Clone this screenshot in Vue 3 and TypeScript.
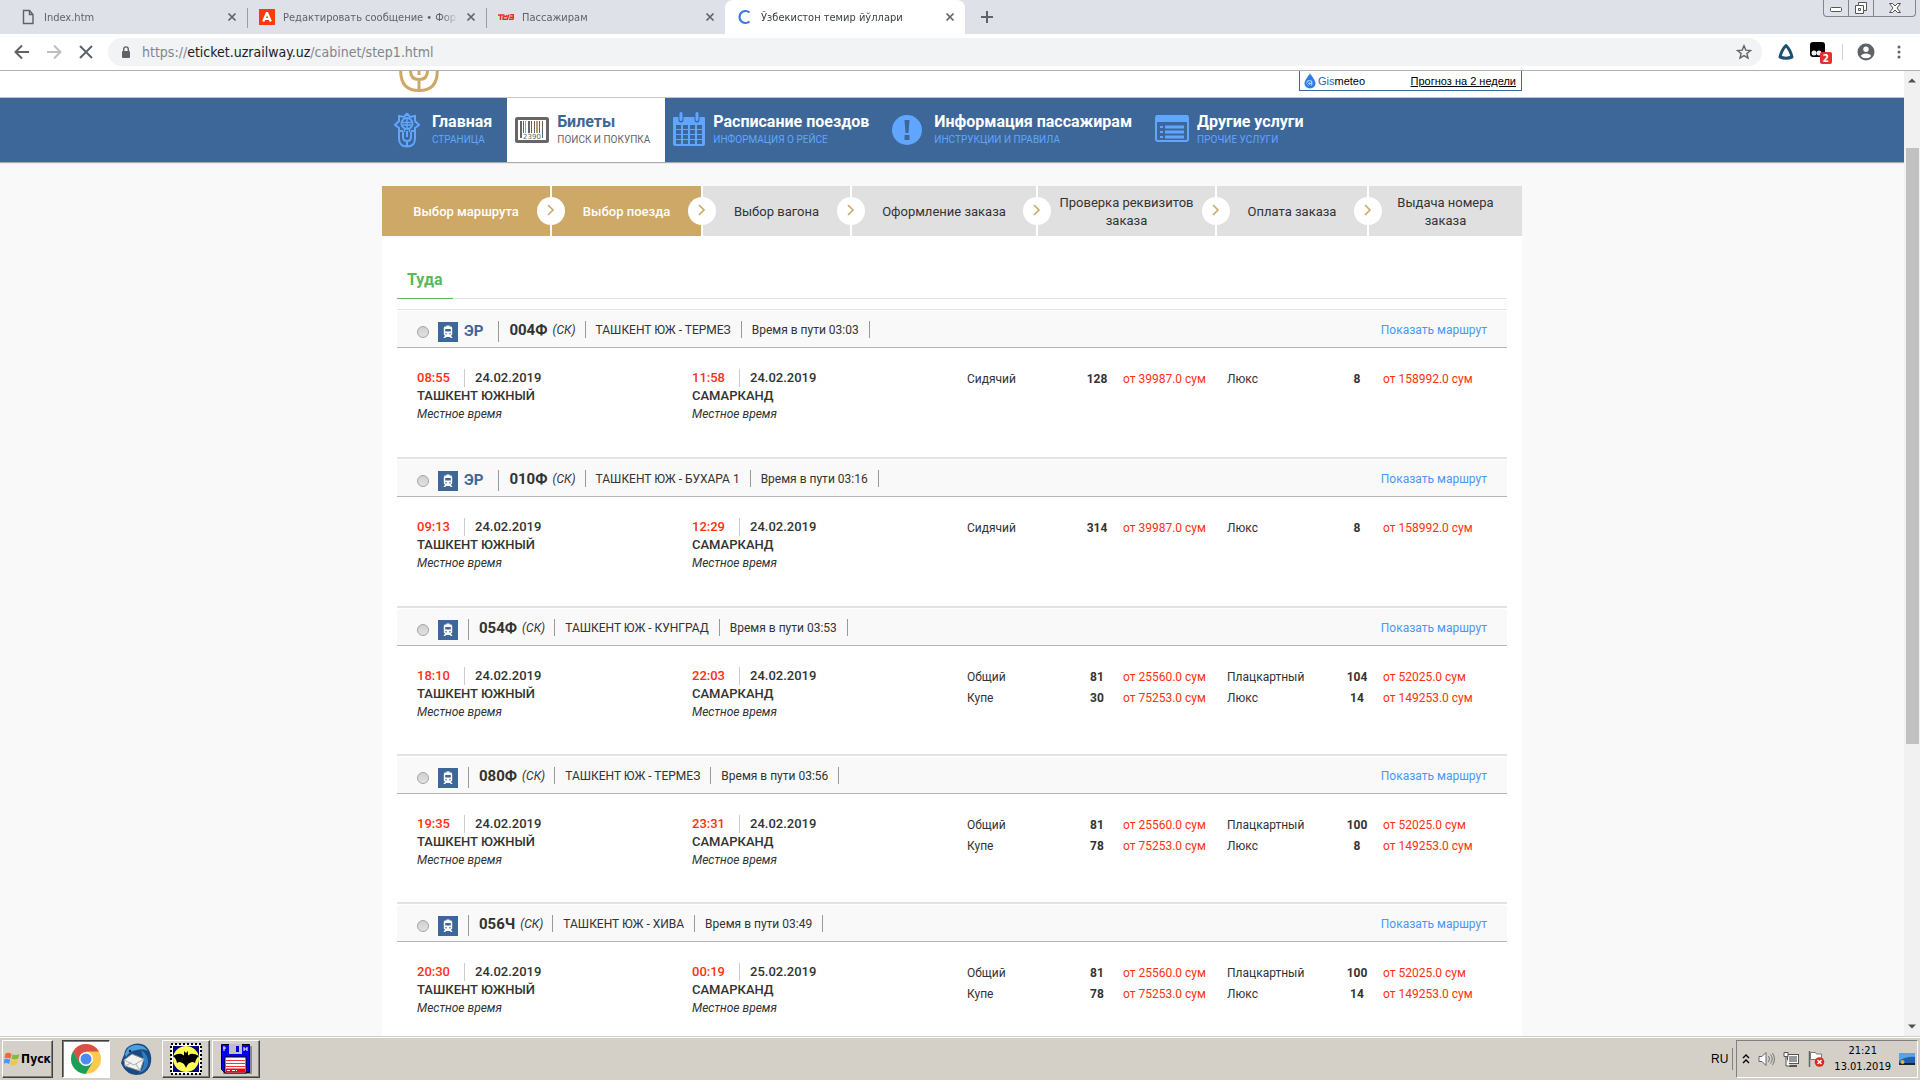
<script setup lang="ts">
import { ref } from 'vue'

interface Tab { title: string; icon: 'file' | 'red' | 'rzd' | 'spin'; active?: boolean }
interface Seat { name: string; count: number; price: string }
interface Train {
  no: string; fast?: boolean; route: string; time: string
  dep: string; depDate: string; arr: string; arrDate: string; seats: Seat[][]
}

const tabs: Tab[] = [
  { title: 'Index.htm', icon: 'file' },
  { title: 'Редактировать сообщение • Форум', icon: 'red' },
  { title: 'Пассажирам', icon: 'rzd' },
  { title: 'Ўзбекистон темир йўллари', icon: 'spin', active: true },
]

const nav = [
  { id: 'home', title: 'Главная', sub: 'Страница' },
  { id: 'ticket', title: 'Билеты', sub: 'Поиск и покупка' },
  { id: 'calendar', title: 'Расписание поездов', sub: 'Информация о рейсе' },
  { id: 'info', title: 'Информация пассажирам', sub: 'Инструкции и правила' },
  { id: 'list', title: 'Другие услуги', sub: 'Прочие услуги' },
]

const steps = [
  'Выбор маршрута', 'Выбор поезда', 'Выбор вагона', 'Оформление заказа',
  'Проверка реквизитов заказа', 'Оплата заказа', 'Выдача номера заказа',
]

const seat = (name: string, count: number, price: string): Seat => ({ name, count, price })

const trains: Train[] = [
  { no: '004Ф', fast: true, route: 'ТАШКЕНТ ЮЖ - ТЕРМЕЗ', time: '03:03', dep: '08:55', depDate: '24.02.2019', arr: '11:58', arrDate: '24.02.2019',
    seats: [[seat('Сидячий', 128, '39987.0'), seat('Люкс', 8, '158992.0')]] },
  { no: '010Ф', fast: true, route: 'ТАШКЕНТ ЮЖ - БУХАРА 1', time: '03:16', dep: '09:13', depDate: '24.02.2019', arr: '12:29', arrDate: '24.02.2019',
    seats: [[seat('Сидячий', 314, '39987.0'), seat('Люкс', 8, '158992.0')]] },
  { no: '054Ф', route: 'ТАШКЕНТ ЮЖ - КУНГРАД', time: '03:53', dep: '18:10', depDate: '24.02.2019', arr: '22:03', arrDate: '24.02.2019',
    seats: [[seat('Общий', 81, '25560.0'), seat('Плацкартный', 104, '52025.0')], [seat('Купе', 30, '75253.0'), seat('Люкс', 14, '149253.0')]] },
  { no: '080Ф', route: 'ТАШКЕНТ ЮЖ - ТЕРМЕЗ', time: '03:56', dep: '19:35', depDate: '24.02.2019', arr: '23:31', arrDate: '24.02.2019',
    seats: [[seat('Общий', 81, '25560.0'), seat('Плацкартный', 100, '52025.0')], [seat('Купе', 78, '75253.0'), seat('Люкс', 8, '149253.0')]] },
  { no: '056Ч', route: 'ТАШКЕНТ ЮЖ - ХИВА', time: '03:49', dep: '20:30', depDate: '24.02.2019', arr: '00:19', arrDate: '25.02.2019',
    seats: [[seat('Общий', 81, '25560.0'), seat('Плацкартный', 100, '52025.0')], [seat('Купе', 78, '75253.0'), seat('Люкс', 14, '149253.0')]] },
]

const chosen = ref('')
const bars = [0, 3, 5, 8, 11, 14, 16, 19, 22]
</script>

<template>
  <div class="desktop">
    <header class="browser">
      <div class="tabstrip">
        <div v-for="t in tabs" :key="t.title" class="tab" :class="{ active: t.active }">
          <svg v-if="t.icon === 'file'" class="fav" viewBox="0 0 16 16"><path d="M3.500 1.500h6l3.500 4v9h-9.500z M9.500 1.500v4h3.500" fill="none" stroke="#5f6368" stroke-width="1.400" /></svg>
          <svg v-else-if="t.icon === 'red'" class="fav" viewBox="0 0 16 16"><rect width="16" height="16" fill="#f93a0c" /><path d="M8 3.500L4.200 12.500M8 3.500l3.800 9M5.500 10h5" fill="none" stroke="#fff" stroke-width="2.200" /></svg>
          <svg v-else-if="t.icon === 'rzd'" class="fav" viewBox="0 0 16 16"><path d="M0 6h6.500M2.500 6v5M5 11V8.500q0-1 1-1h2.500V6M5.500 10.300h4l1-4h1M11 10.300h3.500q.8 0 .8-.8V5.800h-3M11.500 8.300h3.500" fill="none" stroke="#e0301e" stroke-width="1.400" /></svg>
          <svg v-else class="fav" viewBox="0 0 16 16"><path d="M12.500 3.500a6 6 0 1 0 0 9" fill="none" stroke="#3b78e7" stroke-width="2.200" /></svg>
          <span class="tab-title">{{ t.title }}</span>
          <button class="plain" aria-label="Закрыть"><svg width="10" height="10" viewBox="0 0 10 10"><path d="M1.500 1.500l7 7M8.500 1.500l-7 7" stroke="#5f6368" stroke-width="1.700" /></svg></button>
        </div>
        <button class="plain newtab" aria-label="Новая вкладка"><svg width="14" height="14" viewBox="0 0 14 14"><path d="M7 1v12M1 7h12" stroke="#5f6368" stroke-width="2" /></svg></button>
        <div class="winbtns">
          <button aria-label="Свернуть"><svg width="14" height="10" viewBox="0 0 14 10"><rect x="1.500" y="4.500" width="11" height="4" rx="1" fill="#fff" stroke="#555" /></svg></button>
          <button aria-label="Развернуть"><svg width="14" height="14" viewBox="0 0 14 14"><path d="M4.500 1.500h8v8h-3v3h-8v-8h3z" fill="#fff" stroke="#555" /><path d="M4.500 4.500h5v5M4.500 7.500h2v2h-2z" fill="none" stroke="#555" /></svg></button>
          <button class="wide" aria-label="Закрыть окно"><svg width="14" height="12" viewBox="0 0 14 12"><path d="M1.500 1.500h3L7 4l2.500-2.500h3L9 6l3.500 4.500h-3L7 8l-2.500 2.500h-3L5 6z" fill="#fff" stroke="#555" /></svg></button>
        </div>
      </div>

      <div class="toolbar">
        <button class="plain tool" aria-label="Назад"><svg width="16" height="16" viewBox="0 0 16 16"><path d="M15 8H2M8 1.500L1.500 8L8 14.500" fill="none" stroke="#5f6368" stroke-width="2" /></svg></button>
        <button class="plain tool" aria-label="Вперёд"><svg width="16" height="16" viewBox="0 0 16 16"><path d="M1 8h13M8 1.500L14.500 8L8 14.500" fill="none" stroke="#bdbfc1" stroke-width="2" /></svg></button>
        <button class="plain tool" aria-label="Остановить"><svg width="16" height="16" viewBox="0 0 16 16"><path d="M2 2l12 12M14 2L2 14" stroke="#5f6368" stroke-width="2" /></svg></button>
        <div class="omnibox">
          <svg width="10" height="13" viewBox="0 0 10 13"><rect x="1" y="5" width="8" height="7" rx="1" fill="#5f6368" /><path d="M2.700 5V3.200a2.300 2.300 0 0 1 4.600 0V5" fill="none" stroke="#5f6368" stroke-width="1.400" /></svg>
          <div class="url">https://<b>eticket.uzrailway.uz</b>/cabinet/step1.html</div>
          <button class="plain" aria-label="Добавить в закладки"><svg width="16" height="16" viewBox="0 0 16 16"><path d="M8 1.800l1.800 4.300 4.700.4-3.600 3 1.100 4.600L8 11.600l-4 2.500 1.100-4.600-3.600-3 4.700-.4z" fill="none" stroke="#5f6368" stroke-width="1.400" /></svg></button>
        </div>
        <div class="exts">
          <svg width="18" height="18" viewBox="0 0 18 18"><path d="M9 2.500C11 4.500 14 9.500 15 14Q9 16.500 3 14C4 9.500 7 4.500 9 2.500z" fill="none" stroke="#1d4f73" stroke-width="3" stroke-linejoin="round" /></svg>
          <svg width="24" height="24" viewBox="0 0 24 24"><rect x="1" y="2" width="15" height="15" rx="3" fill="#000" /><circle cx="5" cy="13" r="2.500" fill="#eee" /><circle cx="10" cy="13" r="2.500" fill="#eee" /><rect x="11" y="12" width="12" height="12" rx="2" fill="#e53030" /><text x="17" y="22" text-anchor="middle" class="badge">2</text></svg>
          <i class="tb-sep"></i>
          <svg width="18" height="18" viewBox="0 0 18 18"><circle cx="9" cy="9" r="8.500" fill="#5f6368" /><circle cx="9" cy="6.300" r="2.700" fill="#fff" /><path d="M3.700 13q1.500-2.600 5.300-2.600t5.300 2.600q-1.800 2.300-5.300 2.300T3.700 13z" fill="#fff" /></svg>
          <svg width="4" height="16" viewBox="0 0 4 16"><circle v-for="y in [3, 8, 13]" :key="y" cx="2" :cy="y" r="1.500" fill="#5f6368" /></svg>
        </div>
      </div>
    </header>

    <main class="viewport">
      <div class="page">
        <div class="site-head">
          <div class="wrap head-row">
            <svg class="logo" width="40" height="22" viewBox="0 0 40 22"><g fill="none" stroke="#cda867" stroke-width="3"><path d="M1.700 0Q1.700 19.500 20 19.500T38.300 0" /><path d="M11.500 0q0 8.500 8.500 8.500T28.500 0M20 8.500v11M20 0v4" /></g></svg>
            <div class="gis">
              <svg width="12" height="16" viewBox="0 0 12 16"><path d="M6 .5Q11.500 7.500 11.500 10.500a5.500 5 0 0 1-11 0Q.5 7.500 6 .5z" fill="#2f7be8" /><circle cx="5.500" cy="10" r="3" fill="#9cd2ff" /><path d="M7 9.500a1.800 1.800 0 1 0 0 2" fill="none" stroke="#1a4fc4" /></svg>
              <span><em>Gis</em>meteo</span>
              <a href="#">Прогноз на 2 недели</a>
            </div>
          </div>
        </div>

        <nav class="mainnav">
          <div class="wrap nav-row">
            <a v-for="n in nav" :key="n.id" href="#" class="nav-item" :class="{ current: n.id === 'ticket' }">
              <svg v-if="n.id === 'home'" width="34" height="36" viewBox="0 0 34 36"><g fill="none" stroke="#60a5ff" stroke-width="2"><path d="M17 1.500l3 3.500 5-1v5l4 4-4 3v3h-4M17 1.500L14 5 9 4v5l-4 4 4 3v3h4" /><circle cx="17" cy="11.500" r="5.500" /><path d="M12.500 10.500h9M13 13h8M17 6v10M14.500 17v3M19.500 17v3" stroke-width="1.500" /><path d="M9 18.500v8q0 8 8 8t8-8v-8M13 20v5q0 4 4 4t4-4v-5M17 19v6M17 29v5" /></g></svg>
              <svg v-else-if="n.id === 'ticket'" width="34" height="36" viewBox="0 0 34 36"><rect x="1.500" y="6.500" width="31" height="23" rx="1" fill="#fff" stroke="#666" stroke-width="3" /><rect v-for="(b, i) in bars" :key="b" :x="5 + b" y="9" :width="i % 3 === 0 ? 2 : 1" :height="i === 0 || i === 8 ? 17 : 12" :fill="i % 4 === 2 ? '#c79a5a' : '#666'" /><text x="17" y="27" text-anchor="middle" class="barnum">2390</text></svg>
              <svg v-else-if="n.id === 'calendar'" width="32" height="36" viewBox="1 1 32 36"><path d="M2 6h30q1 0 1 1v26q0 2-2 2H3q-2 0-2-2V7q0-1 1-1z" fill="#60a5ff" /><g fill="#3d6798"><rect v-for="k in 16" :key="k" :x="4 + ((k - 1) % 4) * 7" :y="14 + Math.floor((k - 1) / 4) * 5" width="5" height="4" /></g><path d="M9 3v6M25 3v6" stroke="#3d6798" stroke-width="5" stroke-linecap="round" /><path d="M9 2.500v6M25 2.500v6" stroke="#60a5ff" stroke-width="3" stroke-linecap="round" /></svg>
              <svg v-else-if="n.id === 'info'" width="34" height="36" viewBox="2 0 34 36"><circle cx="17" cy="18" r="15" fill="#60a5ff" /><path d="M14.500 8h5l-1 13h-3z M14.500 23h5v5h-5z" fill="#3d6798" /></svg>
              <svg v-else width="34" height="36" viewBox="0 1 34 36"><rect x="1" y="5" width="32" height="25" rx="2" fill="#3d6798" stroke="#60a5ff" stroke-width="2" /><rect x="1" y="4" width="32" height="7" fill="#60a5ff" /><path d="M10 16h19M10 21h19M10 26h19" stroke="#60a5ff" stroke-width="3" /><path d="M5 16h3M5 21h3M5 26h3" stroke="#60a5ff" stroke-width="2" /></svg>
              <span class="nav-text"><strong>{{ n.title }}</strong><small>{{ n.sub }}</small></span>
            </a>
          </div>
        </nav>

        <div class="wrap content">
          <ol class="steps">
            <li v-for="(s, i) in steps" :key="s" :class="{ done: i < 2 }">
              <span>{{ s }}</span>
              <i v-if="i < steps.length - 1" class="dot"><svg width="8" height="12" viewBox="0 0 8 12"><path d="M1 1l5 5-5 5" fill="none" stroke="#cda867" stroke-width="1.600" /></svg></i>
            </li>
          </ol>

          <div class="panel">
            <div class="dir"><h2>Туда</h2></div>
            <article v-for="t in trains" :key="t.no" class="train" :class="{ fast: t.fast }">
              <div class="train-head">
                <label class="pick">
                  <input v-model="chosen" type="radio" name="train" :value="t.no" :aria-label="'Поезд ' + t.no">
                  <svg width="20" height="20" viewBox="0 0 20 20"><rect width="20" height="20" fill="#3d6798" /><path d="M8.500 3.500h3v1h2l.7 1.500v6.500l-1.200 1.200 1.700 2.300h-2l-.7-1H8l-.7 1h-2L7 13.700 5.800 12.500V6l.7-1.500h2z" fill="#fff" /><path d="M7.200 7h5.600v2.500H7.200z" fill="#3d6798" /><circle cx="8" cy="11.800" r=".8" fill="#3d6798" /><circle cx="12" cy="11.800" r=".8" fill="#3d6798" /></svg>
                  <b v-if="t.fast">ЭР</b>
                </label>
                <div class="num"><b>{{ t.no }}</b><em>(СК)</em></div>
                <span class="cell">{{ t.route }}</span>
                <span class="cell">Время в пути {{ t.time }}</span>
                <a href="#" class="show">Показать маршрут</a>
              </div>
              <div class="train-body">
                <div class="stop">
                  <p><time>{{ t.dep }}</time><span>{{ t.depDate }}</span></p>
                  <p>ТАШКЕНТ ЮЖНЫЙ</p>
                  <p class="local">Местное время</p>
                </div>
                <div class="stop">
                  <p><time>{{ t.arr }}</time><span>{{ t.arrDate }}</span></p>
                  <p>САМАРКАНД</p>
                  <p class="local">Местное время</p>
                </div>
                <table class="seats">
                  <colgroup><col class="c1"><col class="c2"><col class="c1"><col class="c1"><col class="c2"><col></colgroup>
                  <tbody>
                    <tr v-for="(r, i) in t.seats" :key="i">
                      <template v-for="s in r" :key="s.name">
                        <td>{{ s.name }}</td>
                        <td class="count">{{ s.count }}</td>
                        <td class="price">от {{ s.price }} сум</td>
                      </template>
                    </tr>
                  </tbody>
                </table>
              </div>
            </article>
          </div>
        </div>
      </div>
      <div class="scrollbar">
        <svg width="8" height="5" viewBox="0 0 8 5"><path d="M0 4.500L4 .5l4 4z" fill="#505050" /></svg>
        <div class="track"><div class="thumb"></div></div>
        <svg width="8" height="5" viewBox="0 0 8 5"><path d="M0 .5l4 4 4-4z" fill="#505050" /></svg>
      </div>
    </main>

    <footer class="taskbar">
      <button class="start">
        <svg width="16" height="16" viewBox="0 0 16 16"><path d="M1.500 2.500Q4.500 1 7.500 3L6.500 7.500Q3.500 6 .5 7.200z" fill="#ef6a2e" /><path d="M8.500 3.200Q12 5 15.500 3L14.300 7.600Q11 9.500 7.500 7.800z" fill="#84bb3c" /><path d="M.2 8.500Q3.500 7 6.300 8.800L5.200 13Q2.500 11.500 0 12.500z" fill="#4d9be6" /><path d="M7.300 9Q10.500 10.500 14 8.800L12.800 13Q9.500 15 6.200 13.500z" fill="#fac530" /></svg>
        Пуск
      </button>
      <button class="app pressed" aria-label="Chrome">
        <svg width="32" height="32" viewBox="0 0 32 32"><circle cx="16" cy="16" r="15" fill="#fdc94f" /><path d="M3 8.500A15 15 0 0 1 29 8.500H16L9.500 20z" fill="#da4f46" /><path d="M3 8.500A15 15 0 0 0 15.500 31L22.500 19.500 9.500 19.700z" fill="#1b9e59" /><circle cx="16" cy="16" r="7" fill="#fff" /><circle cx="16" cy="16" r="5.500" fill="#4c8bf5" /></svg>
      </button>
      <button class="app flat" aria-label="Thunderbird">
        <svg width="34" height="34" viewBox="0 0 34 34"><path d="M5 13Q6 4 15 2Q25 0 30 8 34 16 31 24 27 33 17 33 8 32 4 25L2 21Q3 17 5 13z" fill="#1b4a80" /><path d="M6 12Q8 4 16 3 25 2 29 9 24 6 18 8 10 9 7 15z" fill="#4f9fdb" /><path d="M22 8q8 5 7 14-2 7-9 9 6-6 5-13z" fill="#2f7ec2" /><path d="M5 18L13 12 25 17 21 29 6 24z" fill="#f3f3f0" stroke="#8a8f96" /><path d="M5 18l10 5 10-6M6 24l6-3M21 29l-4-7" fill="none" stroke="#a9adb3" /><circle cx="11" cy="9" r="1.200" fill="#10243c" /></svg>
      </button>
      <button class="app" aria-label="The Bat!">
        <svg width="32" height="32" viewBox="0 0 32 32"><rect x="1" y="1" width="30" height="30" fill="#fff" stroke="#000" stroke-width="2" stroke-dasharray="2 2" /><rect x="3" y="3" width="26" height="26" fill="#000080" /><circle cx="16" cy="16" r="13" fill="#ffff55" /><path d="M3 13q5-3 9-2 1 2 2 1V8l2 2 2-2v4q1 1 2-1 4-1 9 2-3 2-4 7-3-2-5 0-2 0-4 5-2-5-4-5-2-2-5 0-1-5-4-7z" fill="#000" /></svg>
      </button>
      <button class="app" aria-label="Total Commander">
        <svg width="32" height="32" viewBox="0 0 32 32"><path d="M3 3h29v28H3z" fill="#8a8a8a" /><path d="M1.500 1.500h28v28h-25l-3-3z" fill="#0000f0" stroke="#000" /><rect x="9" y="1" width="13" height="10" fill="#c0c0c0" /><rect x="16" y="3" width="3" height="6" fill="#0000c0" /><rect x="5" y="14" width="21" height="16" fill="#fff" stroke="#000" /><path d="M6 17.500h19M6 20.500h19M6 23.500h19" stroke="#e33" stroke-width="1" /><path d="M6 27.500h19" stroke="#f00" stroke-width="4" /><path d="M7 27.500h3M12 27.500h3M16 27.500h1" stroke="#fff" /><path d="M4 3v5M3 5h3M24 4v4M27 4v4M24 6h3" stroke="#fff" /></svg>
      </button>
      <div class="spacer"></div>
      <span class="lang">RU</span>
      <div class="tray">
        <svg width="8" height="11" viewBox="0 0 8 11"><path d="M1 5l3-3 3 3M1 10l3-3 3 3" fill="none" stroke="#000" stroke-width="1.400" /></svg>
        <svg width="17" height="16" viewBox="0 0 17 16"><path d="M1 5.500h3l4-4v13l-4-4H1z" fill="#fff" stroke="#666" /><path d="M10.500 5q2 3 0 6M12.500 3.500q3.500 4.500 0 9M14.500 2q4 6 0 12" fill="none" stroke="#777" /></svg>
        <svg width="17" height="16" viewBox="0 0 17 16"><rect x="4.500" y="3.500" width="11" height="9" fill="#999" stroke="#555" /><rect x="5.500" y="4.500" width="9" height="7" fill="none" stroke="#fff" /><path d="M6 15h8" stroke="#555" stroke-width="2" /><path d="M1 1.500h4v4H1zM3 6v9h4" fill="#fff" stroke="#555" /></svg>
        <svg width="17" height="16" viewBox="0 0 17 16"><path d="M1.500 0v16" stroke="#666" stroke-width="1.500" /><path d="M2.500 1.500h5l1 1.500h5v7h-5l-1-1.500h-5z" fill="#fff" stroke="#777" /><circle cx="11.500" cy="11" r="4.800" fill="#d92a20" /><path d="M9.500 9l4 4M13.500 9l-4 4" stroke="#fff" stroke-width="1.500" /></svg>
        <div class="clock"><span>21:21</span><span>13.01.2019</span></div>
        <svg width="16" height="14" viewBox="0 0 16 14"><path d="M0 1h16v10H0z" fill="#1f5fae" /><path d="M0 1h16v4Q8 4 0 9z" fill="#5aa2e6" /><path d="M0 11h16v2H0z" fill="#222" /><circle cx="3.500" cy="10" r="2" fill="#f0b030" /></svg>
      </div>
    </footer>
  </div>
</template>

<style>
body { overflow: hidden; }
</style>

<style scoped>
* { box-sizing: border-box; }
.desktop { height: 100vh; display: flex; flex-direction: column; font-family: Roboto, "Liberation Sans", sans-serif; color: #333; }
svg { display: block; flex: none; }
a { text-decoration: none; }
button { font: inherit; padding: 0; }
.plain { border: 0; background: none; display: flex; align-items: center; justify-content: center; }

/* browser chrome */
.browser { flex: none; font-family: "DejaVu Sans Condensed", "DejaVu Sans", sans-serif; }
.tabstrip { display: flex; height: 34px; background: #dee1e8; }
.tab { display: flex; align-items: center; width: 239px; gap: 8px; padding: 0 10px 0 12px; position: relative; color: #5f6368; font-size: 11px; }
.tab:first-child { width: 247px; padding-left: 20px; }
.tab + .tab::before { content: ""; position: absolute; left: 0; top: 8px; width: 1px; height: 20px; background: #9a9ea6; }
.tab.active { background: #fff; border-radius: 8px 8px 0 0; color: #3c4043; width: 240px; }
.tab.active::before { display: none; }
.fav { width: 16px; height: 16px; }
.tab-title { flex: 1; overflow: hidden; white-space: nowrap; mask-image: linear-gradient(90deg, #000 calc(100% - 16px), transparent); }
.newtab { width: 44px; height: 34px; }
.winbtns { margin: 0 4px 0 auto; display: flex; height: 17px; border: 1px solid #808590; border-top: 0; border-radius: 0 0 4px 4px; }
.winbtns button { width: 25px; border: 0; border-right: 1px solid #808590; background: none; display: flex; align-items: center; justify-content: center; }
.winbtns .wide { width: 41px; border-right: 0; }
.toolbar { display: flex; align-items: center; height: 37px; background: #fff; border-bottom: 1px solid #b0b0b2; padding: 0 19px 0 6px; }
.tool { width: 32px; height: 32px; }
.omnibox { flex: 1; display: flex; align-items: center; gap: 11px; height: 28px; margin-left: 6px; padding: 0 10px 0 13px; border-radius: 14px; background: #f1f3f4; font-size: 14px; }
.url { flex: 1; color: #80868b; }
.url b { color: #202124; font-weight: 400; }
.exts { display: flex; align-items: center; margin-left: 15px; gap: 14px; }
.exts > :last-child { margin-left: 8px; }
.badge { fill: #fff; font-size: 10px; font-weight: 700; }
.tb-sep { width: 1px; height: 16px; background: #cfd1d4; margin-left: -5px; }

/* page */
.viewport { flex: 1; min-height: 0; display: flex; background: #f9f9f9; }
.page { flex: 1; min-width: 0; overflow: hidden; }
.wrap { max-width: 1140px; margin: 0 auto; }
.site-head { background: #fff; height: 27px; border-bottom: 1px solid #c4c4c4; }
.head-row { display: flex; justify-content: space-between; align-items: flex-start; padding-left: 17px; }
.gis { display: flex; align-items: center; width: 223px; height: 20px; border: 1px solid #3d6798; border-top: 0; padding: 0 5px 0 4px; gap: 2px; font: 11px/18px "Liberation Sans", Arial, sans-serif; color: #000; }
.gis em { font-style: normal; color: #2a5fc8; }
.gis a { margin-left: auto; color: #000; text-decoration: underline; }
.mainnav { background: #3d6798; box-shadow: 0 1px 1px #aaa; }
.nav-row { display: flex; }
.nav-item { display: flex; align-items: center; gap: 8px; height: 64px; padding: 0 15px 0 8px; color: #fff; white-space: nowrap; }
.nav-text { display: flex; flex-direction: column; }
.nav-text strong { font-size: 16px; line-height: 20px; font-weight: 700; }
.nav-text small { font-size: 10px; line-height: 16px; text-transform: uppercase; color: #60a5ff; }
.current { background: #fff; color: #3d6798; }
.current small { color: #666; }
.barnum { font: 7px "DejaVu Sans", sans-serif; fill: #666; }

.content { margin-top: 24px; background: #fff; }
.steps { list-style: none; margin: 0; padding: 0; display: grid; grid-template-columns: 170fr 151fr 149fr 186fr 179fr 152fr 153fr; height: 50px; font-size: 13px; line-height: 18px; }
.steps li { position: relative; display: flex; align-items: center; justify-content: center; text-align: center; background: #e0e0e0; padding: 2px 20px 0; border-right: 2px solid #fff; }
.steps li:last-child { border-right: 0; }
.steps .done { background: #cda867; color: #fff; font-weight: 500; }
.dot { position: absolute; z-index: 1; right: -15px; top: 11px; width: 28px; height: 28px; border-radius: 50%; background: #fff; display: flex; align-items: center; justify-content: center; padding-bottom: 2px; }

.panel { padding: 26px 15px 0; }
.dir { border-bottom: 1px solid #e3e3e3; margin-bottom: 10px; display: flex; }
.dir h2 { margin: 0 0 -1px; padding: 0 10px; font-size: 16px; line-height: 36px; font-weight: 700; color: #5cb85c; border-bottom: 1px solid #5cb85c; }
.train { border-top: 1px solid #e3e3e3; border-bottom: 1px solid #e3e3e3; }
.train-head { display: flex; height: 38px; padding: 11px 20px 0; background: #f9f9f9; border-bottom: 1px solid #b5b5b5; box-shadow: inset 0 1px #fff; font-size: 12px; line-height: 19px; }
.pick { display: flex; align-items: center; height: 21px; padding-right: 10px; border-right: 1px solid #999; }
.pick input { appearance: none; width: 12px; height: 12px; margin: 0 9px 0 0; border: 1px solid #a5a5a5; border-radius: 50%; background: linear-gradient(#d0d0d0, #e2e2e2); }
.pick input:checked { background: radial-gradient(#444 30%, #e0e0e0 40%); }
.pick b { margin: 0 5px 0 6px; font-size: 15px; font-weight: 700; color: #3d6798; }
.num { display: flex; gap: 5px; height: 17px; padding: 0 9px 0 10px; border-right: 1px solid #999; }
.num b { font-size: 15px; font-weight: 700; }
.cell { height: 17px; padding: 0 10px; border-right: 1px solid #999; }
.show { margin-left: auto; color: #4a97f5; }
.train-body { display: grid; grid-template-columns: 275fr 275fr 540fr; height: 108px; padding: 21px 0 0 20px; }
.fast .train-body { height: 109px; }
.stop { font-size: 13px; line-height: 18px; font-weight: 500; }
.stop p { margin: 0; display: flex; }
.stop time { color: #ff3010; width: 48px; border-right: 1px solid #ccc; margin-right: 10px; }
.stop .local { font-size: 12px; font-style: italic; font-weight: 400; }
.seats { width: 100%; height: 0; table-layout: fixed; border-collapse: collapse; font-size: 12px; line-height: 21px; }
.seats td { padding: 0; white-space: nowrap; }
.c1 { width: 104px; }
.c2 { width: 52px; }
.seats .count { text-align: center; font-weight: 700; }
.seats .price { color: #ff3010; }

.scrollbar { width: 16px; flex: none; background: #f1f1f1; display: flex; flex-direction: column; align-items: center; padding: 7px 0; }
.track { flex: 1; width: 13px; padding: 65px 0 0; }
.thumb { height: 68%; background: #c1c1c1; }

/* taskbar */
.taskbar { flex: none; height: 44px; display: flex; align-items: center; padding: 0 2px; background: #d4d0c8; border-top: 1px solid #d4d0c8; box-shadow: inset 0 1px #fff; font-family: "DejaVu Sans Condensed", "DejaVu Sans", sans-serif; }
.taskbar button { height: 38px; display: flex; align-items: center; justify-content: center; background: #d4d0c8; border: 1px solid; border-color: #fff #404040 #404040 #fff; box-shadow: inset -1px -1px #808080; color: #000; }
.start { width: 51px; gap: 1px; font-size: 12px; font-weight: 700; margin-right: 9px; }
.app { width: 48px; margin-right: 2px; }
.taskbar .pressed { background: #fff; border-color: #404040 #fff #fff #404040; box-shadow: inset 1px 1px #808080; }
.taskbar .flat { border-color: transparent; box-shadow: none; background: none; }
.spacer { flex: 1; }
.lang { font: 12px "Liberation Sans", Arial, sans-serif; color: #000; padding-right: 4px; margin-right: 3px; line-height: 22px; border-right: 1px solid #808080; }
.tray { display: flex; align-items: center; gap: 8px; height: 38px; padding: 0 2px 0 5px; border: 1px solid; border-color: #808080 #fff #fff #808080; }
.clock { display: flex; flex-direction: column; align-items: center; color: #000; font-size: 11px; line-height: 16px; padding-left: 1px; }
</style>
